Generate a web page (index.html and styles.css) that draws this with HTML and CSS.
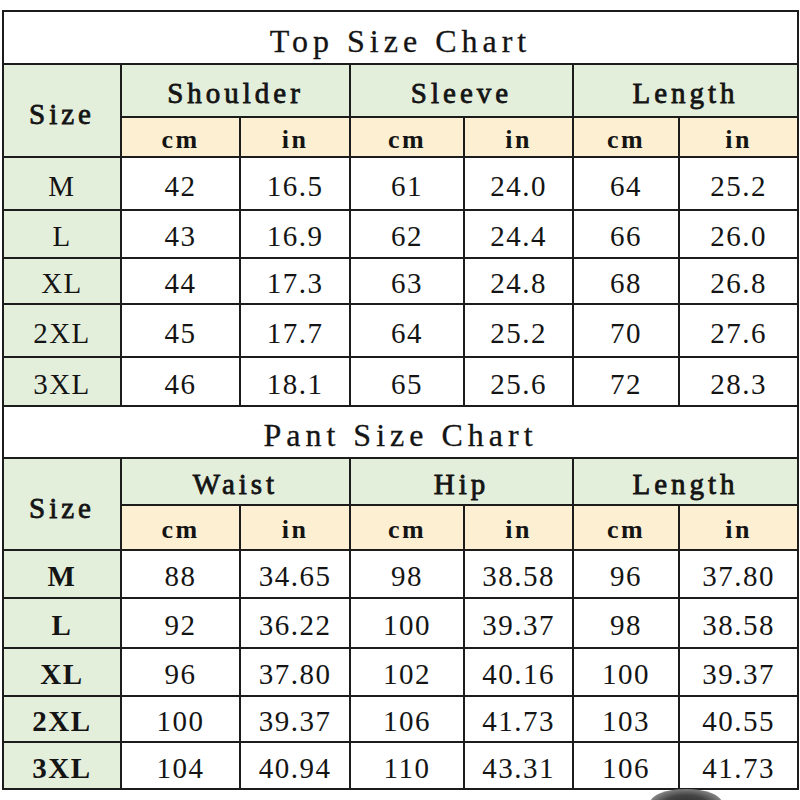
FILE: index.html
```html
<!DOCTYPE html>
<html>
<head>
<meta charset="utf-8">
<link rel="stylesheet" href="styles.css">
</head>
<body>
<div class="page">
<table class="chart">
  <colgroup>
    <col class="c-size"><col class="c1"><col class="c2"><col class="c3"><col class="c4"><col class="c5"><col class="c6">
  </colgroup>
  <tbody>
    <tr class="title-row r53"><td colspan="7" class="title">Top Size Chart</td></tr>
    <tr class="group-row r53">
      <td rowspan="2" class="size-head">Size</td>
      <td colspan="2" class="group">Shoulder</td>
      <td colspan="2" class="group">Sleeve</td>
      <td colspan="2" class="group">Length</td>
    </tr>
    <tr class="unit-row r40">
      <td class="unit">cm</td><td class="unit">in</td>
      <td class="unit">cm</td><td class="unit">in</td>
      <td class="unit">cm</td><td class="unit">in</td>
    </tr>
    <tr class="r53"><td class="size">M</td><td>42</td><td>16.5</td><td>61</td><td>24.0</td><td>64</td><td>25.2</td></tr>
    <tr class="r48"><td class="size">L</td><td>43</td><td>16.9</td><td>62</td><td>24.4</td><td>66</td><td>26.0</td></tr>
    <tr class="r46"><td class="size">XL</td><td>44</td><td>17.3</td><td>63</td><td>24.8</td><td>68</td><td>26.8</td></tr>
    <tr class="r53"><td class="size">2XL</td><td>45</td><td>17.7</td><td>64</td><td>25.2</td><td>70</td><td>27.6</td></tr>
    <tr class="r49"><td class="size">3XL</td><td>46</td><td>18.1</td><td>65</td><td>25.6</td><td>72</td><td>28.3</td></tr>

    <tr class="title-row r52"><td colspan="7" class="title">Pant Size Chart</td></tr>
    <tr class="group-row r47">
      <td rowspan="2" class="size-head">Size</td>
      <td colspan="2" class="group">Waist</td>
      <td colspan="2" class="group">Hip</td>
      <td colspan="2" class="group">Length</td>
    </tr>
    <tr class="unit-row r45">
      <td class="unit">cm</td><td class="unit">in</td>
      <td class="unit">cm</td><td class="unit">in</td>
      <td class="unit">cm</td><td class="unit">in</td>
    </tr>
    <tr class="r48"><td class="size bold">M</td><td>88</td><td>34.65</td><td>98</td><td>38.58</td><td>96</td><td>37.80</td></tr>
    <tr class="r50"><td class="size bold">L</td><td>92</td><td>36.22</td><td>100</td><td>39.37</td><td>98</td><td>38.58</td></tr>
    <tr class="r48"><td class="size bold">XL</td><td>96</td><td>37.80</td><td>102</td><td>40.16</td><td>100</td><td>39.37</td></tr>
    <tr class="r46"><td class="size bold">2XL</td><td>100</td><td>39.37</td><td>106</td><td>41.73</td><td>103</td><td>40.55</td></tr>
    <tr class="r47"><td class="size bold">3XL</td><td>104</td><td>40.94</td><td>110</td><td>43.31</td><td>106</td><td>41.73</td></tr>
  </tbody>
</table>
<div class="shadow"></div>
</div>
</body>
</html>
```

FILE: styles.css
```css
html, body {
  margin: 0;
  padding: 0;
  background: #ffffff;
}

.page {
  position: relative;
  width: 800px;
  height: 800px;
  padding: 10px 0 0 2px;
  box-sizing: border-box;
  overflow: hidden;
}

.chart {
  border-collapse: collapse;
  table-layout: fixed;
  width: 797px;
  font-family: "Liberation Serif", "Times New Roman", serif;
  color: #141414;
}

.c-size { width: 118px; }
.c1 { width: 119px; }
.c2 { width: 110px; }
.c3 { width: 114px; }
.c4 { width: 109px; }
.c5 { width: 106px; }
.c6 { width: 119px; }

.chart td {
  border: 2px solid #1c1c1c;
  padding: 0;
  text-align: center;
  vertical-align: middle;
  font-size: 29px;
  letter-spacing: 1.5px;
  line-height: 1;
  background: #ffffff;
  padding-top: 5px;
}

.r40 { height: 40px; }
.r45 { height: 45px; }
.r46 { height: 46px; }
.r47 { height: 47px; }
.r48 { height: 48px; }
.r49 { height: 49px; }
.r50 { height: 50px; }
.r52 { height: 52px; }
.r53 { height: 53px; }

.chart td.title {
  font-size: 32px;
  letter-spacing: 5px;
  padding-top: 6px;
  -webkit-text-stroke: 0.3px #141414;
}

.chart td.size-head,
.chart td.group {
  background: #e3eedb;
  font-size: 29px;
  letter-spacing: 4px;
  -webkit-text-stroke: 0.8px #141414;
}

.chart td.size-head {
  padding-top: 8px;
}

.chart td.unit {
  background: #fdf0d2;
  font-weight: bold;
  font-size: 26px;
  letter-spacing: 2.5px;
}

.chart td.size {
  background: #e3eedb;
}

.chart td.bold {
  font-weight: bold;
}

.shadow {
  position: absolute;
  left: 650px;
  top: 789px;
  width: 72px;
  height: 28px;
  border-radius: 50%;
  background: radial-gradient(ellipse at 50% 60%, #2a2a2a 0%, #444 45%, #888 75%, rgba(255,255,255,0) 100%);
}
```
